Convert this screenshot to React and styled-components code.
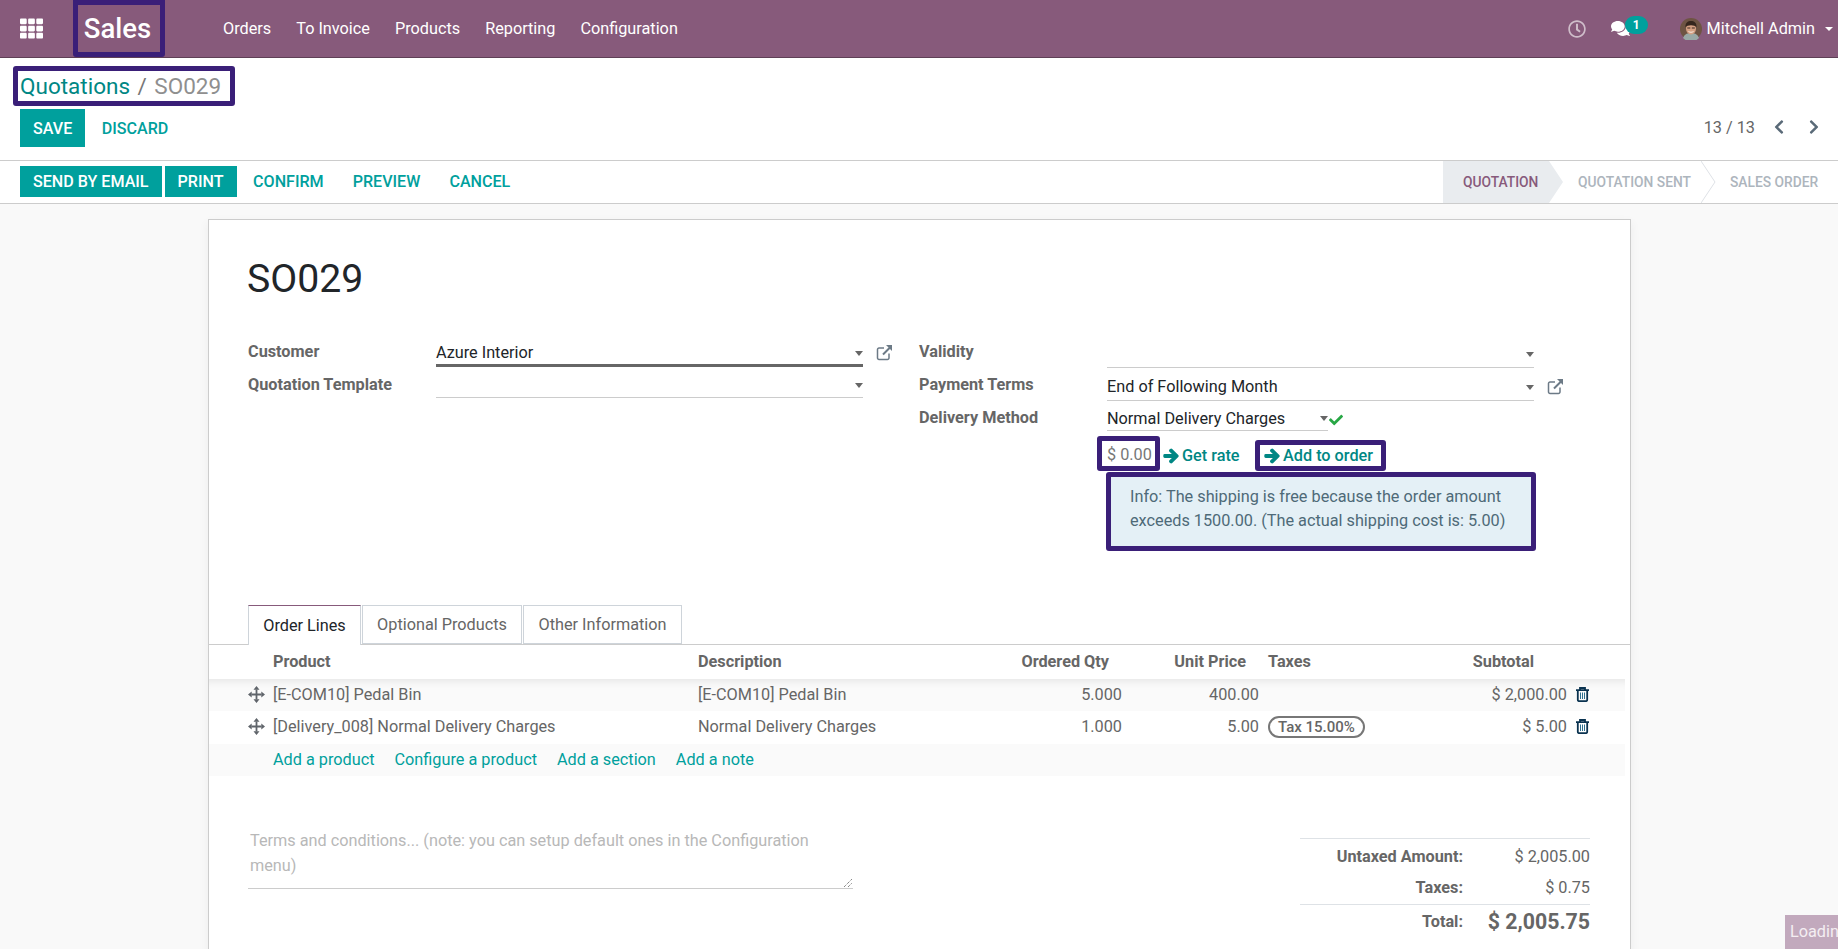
import React from "react";
import styled, { createGlobalStyle } from "styled-components";
import {
  FaTh,
  FaRegClock,
  FaComments,
  FaCheck,
  FaArrowRight,
  FaChevronLeft,
  FaChevronRight
} from "react-icons/fa";

const primary = "#00A09D";
const ink = "#666666";
const note = "#3A1F78";

const GlobalStyle = createGlobalStyle`
  html, body {
    margin: 0;
    height: 100%;
    overflow: hidden;
    background: #f9f9f9;
    font-family: Roboto, "Noto Sans", sans-serif;
    font-size: 16.25px;
    color: ${ink};
  }
`;

const Page = styled.div`
  display: flex;
  flex-direction: column;
  position: relative;
  height: 949px;
  overflow: hidden;
`;

const Nav = styled.header`
  display: flex;
  align-items: center;
  flex: none;
  height: 58px;
  padding: 0 5px 0 20px;
  box-sizing: border-box;
  background: #875a7b;
  border-bottom: 1px solid #5f4056;
  color: #fff;
`;

const Brand = styled.div`
  display: flex;
  justify-content: center;
  align-items: center;
  box-sizing: border-box;
  width: 92px;
  height: 57px;
  margin-left: 30px;
  padding-right: 3px;
  border: 5px solid ${note};
  border-radius: 0 0 3px 3px;
  font-size: 27.5px;
  font-weight: 500;
`;

const Menu = styled.nav`
  display: flex;
  gap: 25px;
  margin-left: 58px;
`;

const Spacer = styled.div`
  flex: 1;
`;

const ChatWrap = styled.div`
  position: relative;
  width: 37px;
  height: 20px;
  margin-left: 25px;
  font-size: 18px;
`;

const Badge = styled.span`
  position: absolute;
  left: 14px;
  top: -3px;
  width: 23px;
  height: 18px;
  border-radius: 9px;
  background: ${primary};
  font-size: 12px;
  font-weight: 700;
  line-height: 18px;
  text-align: center;
`;

const Avatar = styled.svg`
  width: 22px;
  height: 22px;
  margin-left: 32px;
  margin-right: 5px;
`;

const Caret = styled.span`
  display: inline-block;
  border-top: 5px solid ${p => p.color || "#fff"};
  border-left: ${p => p.size || 5}px solid transparent;
  border-right: ${p => p.size || 5}px solid transparent;
`;

const NavCaret = styled(Caret)`
  margin-left: 10px;
  border-top-width: 4px;
`;

const Control = styled.section`
  flex: none;
  background: #fff;
  border-bottom: 1px solid #ccc;
`;

const Crumbs = styled.div`
  box-sizing: border-box;
  width: 222px;
  height: 40px;
  margin: 8px 0 3px 13px;
  padding-left: 2px;
  border: 5px solid ${note};
  border-radius: 3px;
  font-size: 22.5px;
  line-height: 30px;
  white-space: nowrap;
`;

const CrumbLink = styled.span`
  color: #008784;
`;

const CrumbSep = styled.span`
  margin: 0 7.5px;
  color: #777;
`;

const CrumbNow = styled.span`
  color: #8f8f8f;
`;

const ControlRow = styled.div`
  display: flex;
  align-items: center;
  height: 38px;
  padding: 0 16px 0 20px;
  margin-bottom: 13px;
`;

const Pager = styled.div`
  display: flex;
  align-items: center;
  margin-left: auto;
  padding-bottom: 2px;
  color: #666;
`;

const PagerBtn = styled.span`
  display: flex;
  margin-left: ${p => p.gap}px;
  color: #5a6a78;
  font-size: 16px;
`;

const Button = styled.span`
  display: flex;
  align-items: center;
  justify-content: center;
  box-sizing: border-box;
  height: ${p => p.height}px;
  padding: 0 ${p => (p.flat ? 13.5 : 13)}px;
  margin-right: ${p => p.mr || 0}px;
  background: ${p => (p.flat ? "transparent" : primary)};
  color: ${p => (p.flat ? primary : "#fff")};
  font-size: 16.1px;
  font-weight: 500;
  text-transform: uppercase;
  white-space: nowrap;
`;

const StatusBar = styled.section`
  display: flex;
  align-items: center;
  flex: none;
  box-sizing: border-box;
  height: 43px;
  padding-left: 20px;
  background: #fff;
  border-bottom: 1px solid #ccc;
`;

const StatusActions = styled.div`
  display: flex;
  margin-bottom: 2px;
`;

const Steps = styled.div`
  display: flex;
  align-self: stretch;
  margin-left: auto;
`;

const Step = styled.div`
  position: relative;
  display: flex;
  align-items: center;
  box-sizing: border-box;
  width: ${p => p.width}px;
  padding-left: ${p => p.pad}px;
  background: ${p => (p.active ? "#e9ecef" : "transparent")};
  color: ${p => (p.active ? "#875a7b" : "#adb5bd")};
  font-size: 13.8px;
  font-weight: 500;
  text-transform: uppercase;
  white-space: nowrap;
`;

const StepArrow = styled.svg`
  position: absolute;
  left: 100%;
  top: 0;
  width: 15px;
  height: 42px;
  z-index: 1;
`;

const Sheet = styled.main`
  box-sizing: border-box;
  flex: none;
  width: 1423px;
  height: 760px;
  margin: 15px 0 0 208px;
  padding-top: 27px;
  background: #fff;
  border: 1px solid #ccc;
  box-shadow: 0 4px 10px rgba(0, 0, 0, 0.06);
`;

const Title = styled.h1`
  margin: 0 0 0 38px;
  color: #212529;
  font-size: 39.2px;
  font-weight: 400;
  line-height: 64px;
`;

const FormGrid = styled.div`
  display: grid;
  grid-template-columns: 671px 1fr;
  height: 294px;
  padding: 30px 0 0 39px;
  box-sizing: border-box;
`;

const Group = styled.div`
  display: grid;
  grid-template-columns: 188px max-content max-content;
  align-content: start;
  align-items: start;
`;

const Label = styled.label`
  height: ${p => p.h}px;
  font-weight: 700;
  line-height: 22px;
  color: #666;
  grid-column: 1;
`;

const Field = styled.div`
  display: flex;
  align-items: center;
  justify-content: space-between;
  box-sizing: border-box;
  width: ${p => p.width}px;
  height: ${p => p.h}px;
  padding-top: ${p => (p.focus ? 1 : 0)}px;
  border-bottom: ${p => (p.focus ? "3px solid #666" : "1px solid #ccc")};
  color: #212529;
  line-height: 22px;
  grid-column: 2;
`;

const LinkIcon = styled.svg`
  width: 17px;
  height: 17px;
  margin: ${p => p.top}px 0 0 13px;
  grid-column: 3;
`;

const DeliveryField = styled.div`
  display: flex;
  grid-column: 2 / span 2;
`;

const CheckMark = styled.span`
  display: flex;
  margin-top: 6px;
  margin-left: 1px;
  color: #28a745;
  font-size: 14px;
`;

const DeliveryRow = styled.div`
  display: flex;
  align-items: flex-start;
  grid-column: 2 / span 2;
  margin-left: -10px;
`;

const PriceBox = styled.div`
  box-sizing: border-box;
  width: 63px;
  height: 35px;
  padding-left: 5px;
  border: 5px solid ${note};
  border-radius: 3px;
  color: #777;
  line-height: 28px;
`;

const ActionLink = styled.span`
  display: flex;
  align-items: center;
  gap: 3px;
  box-sizing: border-box;
  height: 31px;
  margin-top: 4px;
  color: #008784;
  font-weight: 500;
  white-space: nowrap;
`;

const RateLink = styled(ActionLink)`
  width: 95px;
  padding-left: 3px;
`;

const AddLink = styled(ActionLink)`
  width: 131px;
  padding-left: 4px;
  border: 5px solid ${note};
  border-radius: 3px;
`;

const HeavyArrow = styled(FaArrowRight)`
  width: 16px;
  height: 16px;
  stroke: currentColor;
  stroke-width: 45px;
`;

const InfoBox = styled.div`
  box-sizing: border-box;
  width: 430px;
  height: 79px;
  margin: 1px 0 0 -1px;
  padding: 8px 0 0 19px;
  grid-column: 2 / span 2;
  background: #e4f0f6;
  border: 5px solid ${note};
  border-radius: 3px;
  color: #4e6a78;
  line-height: 24px;
  white-space: nowrap;
`;

const TabBar = styled.div`
  display: flex;
  align-items: flex-end;
  height: 39px;
  padding-left: 39px;
  border-bottom: 1px solid #ccc;
`;

const Tab = styled.div`
  display: flex;
  align-items: center;
  justify-content: center;
  box-sizing: border-box;
  width: ${p => p.width}px;
  height: ${p => (p.active ? 40 : 39)}px;
  margin-right: 1px;
  margin-bottom: ${p => (p.active ? -1 : 0)}px;
  background: #fff;
  color: ${p => (p.active ? "#212529" : "#666")};
  border: 1px solid #ced4da;
  border-bottom: ${p => (p.active ? "none" : "1px solid #ced4da")};
  border-top: 1px solid ${p => (p.active ? "#875a7b" : "#ced4da")};
`;

const Row = styled.div`
  display: grid;
  grid-template-columns: 64px 425px 302px 130px 137px 170px 138px 1fr;
  align-items: center;
  box-sizing: border-box;
  height: ${p => p.h}px;
  padding-bottom: 2px;
  margin-right: 5px;
  background: ${p => p.bg || "transparent"};
  box-shadow: ${p => (p.shade ? "inset 0 10px 8px -8px rgba(0, 0, 0, 0.09)" : "none")};
`;

const Head = styled.div`
  padding-right: ${p => p.pr || 0}px;
  font-weight: 700;
  text-align: ${p => (p.right ? "right" : "left")};
  color: #666;
`;

const TaxHead = styled(Head)`
  padding-left: 1px;
`;

const Cell = styled.div`
  padding-right: ${p => (p.right ? 8 : 0)}px;
  text-align: ${p => (p.right ? "right" : "left")};
  color: #666;
  white-space: nowrap;
`;

const TaxCell = styled(Cell)`
  padding-left: 1px;
`;

const HandleIcon = styled.svg`
  display: block;
  width: 17px;
  height: 17px;
  margin-left: 39px;
`;

const TaxTag = styled.span`
  display: inline-block;
  padding: 0 8px;
  border: 2px solid #777;
  border-radius: 12px;
  color: #666;
  font-size: 15px;
  font-weight: 500;
  line-height: 18px;
`;

const TrashIcon = styled.svg`
  display: block;
  width: 13px;
  height: 15px;
  margin-left: 1px;
`;

const AddRow = styled.div`
  display: flex;
  align-items: center;
  gap: 20px;
  grid-column: 2 / -1;
`;

const AddAction = styled.span`
  color: ${primary};
`;

const Footer = styled.div`
  display: flex;
  justify-content: space-between;
  margin-top: 41px;
  padding: 0 40px 0 39px;
`;

const Terms = styled.div`
  position: relative;
  box-sizing: border-box;
  width: 605px;
  height: 60px;
  margin-top: 12px;
  padding: 0 30px 0 2px;
  border-bottom: 1px solid #ccc;
  color: #b8b8b8;
  line-height: 24.5px;
`;

const Grip = styled.svg`
  position: absolute;
  right: 0;
  bottom: 0;
  width: 10px;
  height: 10px;
`;

const Totals = styled.div`
  width: 290px;
  margin-top: 21px;
  border-top: 1px solid #dee2e6;
`;

const TotalRow = styled.div`
  display: grid;
  grid-template-columns: 163px 1fr;
  align-items: center;
  box-sizing: border-box;
  height: ${p => p.h}px;
  padding-bottom: ${p => p.pb || 0}px;
  border-top: ${p => (p.rule ? "1px solid #dee2e6" : "none")};
`;

const TotalLabel = styled.div`
  font-weight: 700;
  text-align: right;
  color: #666;
`;

const TotalValue = styled.div`
  text-align: right;
  color: #666;
  font-size: ${p => (p.big ? 21.3 : 16.25)}px;
  font-weight: ${p => (p.big ? 700 : 400)};
`;

const Loading = styled.div`
  position: absolute;
  left: 1785px;
  top: 915px;
  box-sizing: border-box;
  width: 53px;
  height: 34px;
  padding: 7px 0 0 5px;
  overflow: hidden;
  background: #c2a9bd;
  color: #f4eef2;
  white-space: nowrap;
`;

const ExternalLink = ({ top }) => (
  <LinkIcon top={top} viewBox="0 0 17 17" fill="none" stroke="#6c7a86" strokeWidth="1.5">
    <path d="M13 9.500V14a1.500 1.500 0 0 1-1.500 1.500H3A1.500 1.500 0 0 1 1.500 14V5.500A1.500 1.500 0 0 1 3 4h5" />
    <path d="M7 10.500 15 2.500" strokeWidth="2" />
    <path d="M10 1h6v6z" fill="#6c7a86" stroke="none" />
  </LinkIcon>
);

const DragHandle = () => (
  <HandleIcon viewBox="0 0 17 17" fill="#5f646a">
    <path d="M7.600 3.500h1.800v10H7.600zM3.500 7.600h10v1.800h-10z" />
    <path d="M8.500 0 11.500 3.700H5.500zM8.500 17 5.500 13.300h6zM0 8.500 3.700 5.500v6zM17 8.500 13.300 11.500v-6z" />
  </HandleIcon>
);

const Trash = () => (
  <TrashIcon viewBox="0 0 13 15" fill="none" stroke="#0a3350" strokeWidth="1.8">
    <path d="M0 3.200h13M4 3V1h5v2M1.800 3.200v9.600A1.400 1.400 0 0 0 3.200 14.200h6.600a1.400 1.400 0 0 0 1.400-1.400V3.200" />
    <path d="M4.500 5.500v6.500M6.500 5.500v6.500M8.500 5.500v6.500" stroke="#2d6f8f" strokeWidth="1" />
  </TrashIcon>
);

const lines = [
  {
    product: "[E-COM10] Pedal Bin",
    description: "[E-COM10] Pedal Bin",
    qty: "5.000",
    price: "400.00",
    subtotal: "$ 2,000.00",
    shade: true
  },
  {
    product: "[Delivery_008] Normal Delivery Charges",
    description: "Normal Delivery Charges",
    qty: "1.000",
    price: "5.00",
    tax: "Tax 15.00%",
    subtotal: "$ 5.00"
  }
];

const App = () => (
  <Page>
    <GlobalStyle />
    <Nav>
      <FaTh size={23} />
      <Brand>Sales</Brand>
      <Menu>
        <span>Orders</span>
        <span>To Invoice</span>
        <span>Products</span>
        <span>Reporting</span>
        <span>Configuration</span>
      </Menu>
      <Spacer />
      <FaRegClock size={18} color="#cfbdca" />
      <ChatWrap>
        <FaComments size={19} />
        <Badge>1</Badge>
      </ChatWrap>
      <Avatar viewBox="0 0 22 22">
        <circle cx="11" cy="11" r="11" fill="#6e5443" />
        <path d="M3 20c1.500-4 4.500-5 8-5s6.500 1 8 5a11 11 0 0 1-16 0z" fill="#9aa9a6" />
        <ellipse cx="11" cy="10.500" rx="5" ry="6" fill="#d6a183" />
        <path d="M5.500 9.500C5 4.500 8 3 11 3s6 1.500 5.500 6.500C15 6.500 7 6.500 5.500 9.500z" fill="#35261d" />
        <path d="M7.300 10h3M11.800 10h3" stroke="#3a2a22" strokeWidth="1.200" />
        <path d="M8.500 13.500c1.500 1 3.500 1 5 0" stroke="#fff" strokeWidth="0.800" fill="none" />
      </Avatar>
      <span>Mitchell Admin</span>
      <NavCaret size={4} />
    </Nav>

    <Control>
      <Crumbs>
        <CrumbLink>Quotations</CrumbLink>
        <CrumbSep>/</CrumbSep>
        <CrumbNow>SO029</CrumbNow>
      </Crumbs>
      <ControlRow>
        <Button height={38} mr={3}>Save</Button>
        <Button flat height={38}>Discard</Button>
        <Pager>
          13 / 13
          <PagerBtn gap={16}><FaChevronLeft /></PagerBtn>
          <PagerBtn gap={19}><FaChevronRight /></PagerBtn>
        </Pager>
      </ControlRow>
    </Control>

    <StatusBar>
      <StatusActions>
        <Button height={31} mr={3}>Send by email</Button>
        <Button height={31} mr={3}>Print</Button>
        <Button flat height={31} mr={2}>Confirm</Button>
        <Button flat height={31} mr={2}>Preview</Button>
        <Button flat height={31}>Cancel</Button>
      </StatusActions>
      <Steps>
        <Step active width={106} pad={20}>
          Quotation
          <StepArrow viewBox="0 0 15 42">
            <path d="M0 0 14 21 0 42z" fill="#e9ecef" />
          </StepArrow>
        </Step>
        <Step width={152} pad={29}>
          Quotation Sent
          <StepArrow viewBox="0 0 15 42">
            <path d="M0 0 14 21 0 42" fill="#fff" stroke="#dee2e6" />
          </StepArrow>
        </Step>
        <Step width={137} pad={29}>Sales Order</Step>
      </Steps>
    </StatusBar>

    <Sheet>
      <Title>SO029</Title>
      <FormGrid>
        <Group>
          <Label h={33}>Customer</Label>
          <Field focus width={427} h={26}>
            Azure Interior
            <Caret size={4.5} color="#666" />
          </Field>
          <ExternalLink top={3} />
          <Label h={33}>Quotation Template</Label>
          <Field width={427} h={24}>
            <span />
            <Caret size={4.5} color="#666" />
          </Field>
        </Group>
        <Group>
          <Label h={33}>Validity</Label>
          <Field width={427} h={27}>
            <span />
            <Caret size={4.5} color="#666" />
          </Field>
          <span />
          <Label h={33}>Payment Terms</Label>
          <Field width={427} h={27}>
            End of Following Month
            <Caret size={4.5} color="#666" />
          </Field>
          <ExternalLink top={4} />
          <Label h={29}>Delivery Method</Label>
          <DeliveryField>
            <Field width={221} h={24}>
              Normal Delivery Charges
              <Caret size={4.5} color="#666" />
            </Field>
            <CheckMark><FaCheck /></CheckMark>
          </DeliveryField>
          <DeliveryRow>
            <PriceBox>$ 0.00</PriceBox>
            <RateLink><HeavyArrow />Get rate</RateLink>
            <AddLink><HeavyArrow />Add to order</AddLink>
          </DeliveryRow>
          <InfoBox>
            Info: The shipping is free because the order amount
            <br />
            exceeds 1500.00. (The actual shipping cost is: 5.00)
          </InfoBox>
        </Group>
      </FormGrid>

      <TabBar>
        <Tab active width={113}>Order Lines</Tab>
        <Tab width={160}>Optional Products</Tab>
        <Tab width={159}>Other Information</Tab>
      </TabBar>

      <Row h={34}>
        <span />
        <Head>Product</Head>
        <Head>Description</Head>
        <Head right pr={21}>Ordered Qty</Head>
        <Head right pr={21}>Unit Price</Head>
        <TaxHead>Taxes</TaxHead>
        <Head right pr={41}>Subtotal</Head>
        <span />
      </Row>
      {lines.map(line => (
        <Row key={line.product} h={line.shade ? 32 : 33} shade={line.shade} bg={line.shade ? "#fafafa" : "#fff"}>
          <DragHandle />
          <Cell>{line.product}</Cell>
          <Cell>{line.description}</Cell>
          <Cell right>{line.qty}</Cell>
          <Cell right>{line.price}</Cell>
          <TaxCell>{line.tax && <TaxTag>{line.tax}</TaxTag>}</TaxCell>
          <Cell right>{line.subtotal}</Cell>
          <Trash />
        </Row>
      ))}
      <Row h={32} bg="#fafafa">
        <span />
        <AddRow>
          <AddAction>Add a product</AddAction>
          <AddAction>Configure a product</AddAction>
          <AddAction>Add a section</AddAction>
          <AddAction>Add a note</AddAction>
        </AddRow>
      </Row>

      <Footer>
        <Terms>
          Terms and conditions... (note: you can setup default ones in the Configuration menu)
          <Grip viewBox="0 0 10 10" stroke="#555" strokeWidth="1" strokeDasharray="1 1">
            <path d="M1 9 9 1M5 9 9 5" />
          </Grip>
        </Terms>
        <Totals>
          <TotalRow h={35}>
            <TotalLabel>Untaxed Amount:</TotalLabel>
            <TotalValue>$ 2,005.00</TotalValue>
          </TotalRow>
          <TotalRow h={30} pb={3}>
            <TotalLabel>Taxes:</TotalLabel>
            <TotalValue>$ 0.75</TotalValue>
          </TotalRow>
          <TotalRow rule h={34}>
            <TotalLabel>Total:</TotalLabel>
            <TotalValue big>$ 2,005.75</TotalValue>
          </TotalRow>
        </Totals>
      </Footer>
    </Sheet>
    <Loading>Loading</Loading>
  </Page>
);

export default App;
